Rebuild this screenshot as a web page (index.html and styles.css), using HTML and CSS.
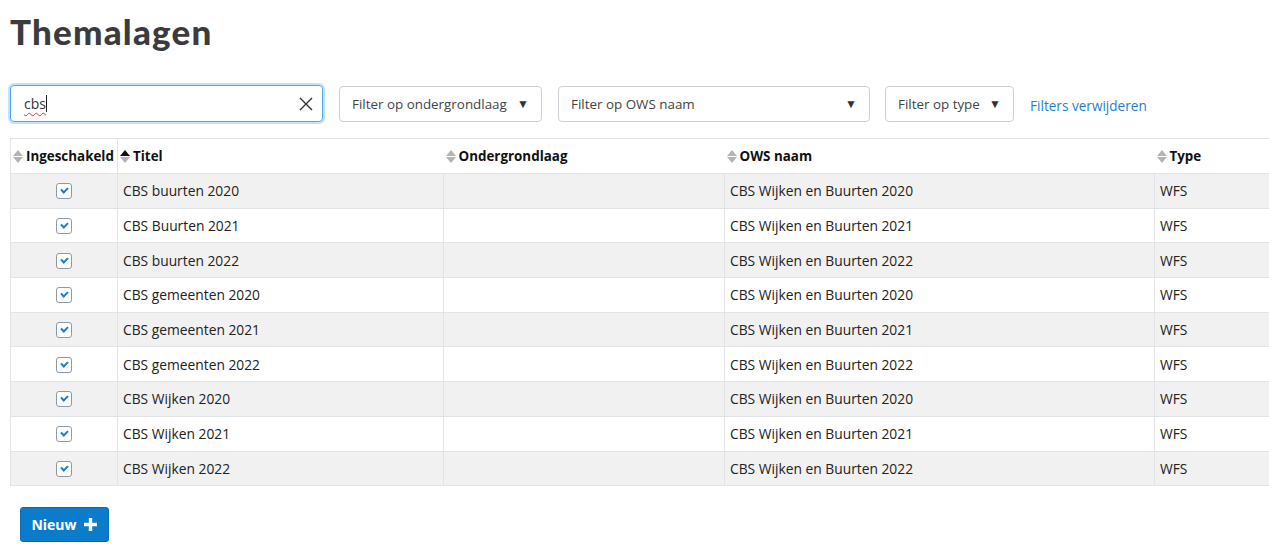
FILE: index.html
```html
<!DOCTYPE html>
<html lang="nl">
<head>
<meta charset="utf-8">
<title>Themalagen</title>
<link rel="stylesheet" href="styles.css">
</head>
<body>
<div class="page">
  <h1 class="title">Themalagen</h1>
  <div class="filters">
    <div class="search">
      <span class="search-text"><span class="typo">cbs</span><span class="caret"></span></span>
      <svg class="clear" width="14" height="14" viewBox="0 0 14 14"><path d="M1 1L13 13M13 1L1 13" stroke="#333" stroke-width="1.4" fill="none"/></svg>
    </div>
    <div class="select sel-onder"><span>Filter op ondergrondlaag</span><span class="arrow">▼</span></div>
    <div class="select sel-ows"><span>Filter op OWS naam</span><span class="arrow">▼</span></div>
    <div class="select sel-type"><span>Filter op type</span><span class="arrow">▼</span></div>
    <a class="reset" href="#">Filters verwijderen</a>
  </div>
  <table class="grid">
    <colgroup>
      <col class="c1"><col class="c2"><col class="c3"><col class="c4"><col class="c5">
    </colgroup>
    <thead>
      <tr>
        <th class="first"><span class="sort"><i class="up"></i><i class="down"></i></span>Ingeschakeld</th>
        <th><span class="sort"><i class="up active"></i><i class="down"></i></span>Titel</th>
        <th><span class="sort"><i class="up"></i><i class="down"></i></span>Ondergrondlaag</th>
        <th><span class="sort"><i class="up"></i><i class="down"></i></span>OWS naam</th>
        <th><span class="sort"><i class="up"></i><i class="down"></i></span>Type</th>
      </tr>
    </thead>
    <tbody>
      <tr><td class="chk"><span class="box"></span></td><td>CBS buurten 2020</td><td></td><td>CBS Wijken en Buurten 2020</td><td>WFS</td></tr>
      <tr><td class="chk"><span class="box"></span></td><td>CBS Buurten 2021</td><td></td><td>CBS Wijken en Buurten 2021</td><td>WFS</td></tr>
      <tr><td class="chk"><span class="box"></span></td><td>CBS buurten 2022</td><td></td><td>CBS Wijken en Buurten 2022</td><td>WFS</td></tr>
      <tr><td class="chk"><span class="box"></span></td><td>CBS gemeenten 2020</td><td></td><td>CBS Wijken en Buurten 2020</td><td>WFS</td></tr>
      <tr><td class="chk"><span class="box"></span></td><td>CBS gemeenten 2021</td><td></td><td>CBS Wijken en Buurten 2021</td><td>WFS</td></tr>
      <tr><td class="chk"><span class="box"></span></td><td>CBS gemeenten 2022</td><td></td><td>CBS Wijken en Buurten 2022</td><td>WFS</td></tr>
      <tr><td class="chk"><span class="box"></span></td><td>CBS Wijken 2020</td><td></td><td>CBS Wijken en Buurten 2020</td><td>WFS</td></tr>
      <tr><td class="chk"><span class="box"></span></td><td>CBS Wijken 2021</td><td></td><td>CBS Wijken en Buurten 2021</td><td>WFS</td></tr>
      <tr><td class="chk"><span class="box"></span></td><td>CBS Wijken 2022</td><td></td><td>CBS Wijken en Buurten 2022</td><td>WFS</td></tr>
    </tbody>
  </table>
  <button class="new" type="button">Nieuw <svg width="15" height="15" viewBox="0 0 15 15"><path d="M7.5 1V14M1 7.5H14" stroke="#fff" stroke-width="3.4" fill="none"/></svg></button>
</div>
</body>
</html>
```
FILE: styles.css
```css
* { box-sizing: border-box; }
html, body { margin: 0; padding: 0; background: #fff; }
body {
  font-family: "Open Sans", "Noto Sans", "Liberation Sans", sans-serif;
  font-size: 14px;
  color: #222;
  width: 1269px;
  overflow: hidden;
}
.page { padding: 0 0 0 10px; }
.title {
  margin: 0;
  padding-top: 11px;
  height: 60px;
  font-family: "Lato", "DejaVu Sans", sans-serif;
  font-weight: 900;
  font-size: 35px;
  line-height: 40px;
  color: #3b3b3d;
  letter-spacing: 1.2px;
}
.filters {
  display: flex;
  align-items: center;
  margin-top: 25px;
  height: 37px;
}
.search {
  width: 313px;
  height: 37px;
  border: 1px solid #4aa8ef;
  border-radius: 4px;
  box-shadow: 0 0 0 2px #c4e2fa;
  display: flex;
  align-items: center;
  justify-content: space-between;
  padding: 0 9px 0 13px;
}
.search-text { display: flex; align-items: center; font-size: 14px; color: #333; }
.typo {
  text-decoration: underline wavy #e33;
  text-decoration-thickness: 1px;
  text-underline-offset: 3px;
}
.caret { display: inline-block; width: 1px; height: 17px; background: #222; margin-left: 0; }
.clear { display: block; }
.select {
  height: 36px;
  border: 1px solid #ccd0d6;
  border-radius: 4px;
  display: flex;
  align-items: center;
  justify-content: space-between;
  padding: 0 12px 0 12px;
  color: #444;
  font-size: 13.4px;
  white-space: nowrap;
}
.arrow { font-size: 12px; color: #333; margin-left: 8px; }
.sel-onder { width: 203px; margin-left: 16px; }
.sel-ows { width: 312px; margin-left: 16px; }
.sel-type { width: 129px; margin-left: 15px; }
.reset {
  margin-left: 16px;
  color: #1f7fd0;
  text-decoration: none;
  font-size: 13.6px;
  padding-top: 4px;
}
.grid {
  margin-top: 16px;
  width: 1259px;
  border-collapse: collapse;
  table-layout: fixed;
}
.c1 { width: 107px; }
.c2 { width: 326px; }
.c3 { width: 281px; }
.c4 { width: 430px; }
.c5 { width: 115px; }
.grid th {
  height: 35px;
  text-align: left;
  font-weight: 700;
  color: #111;
  font-size: 13.4px;
  padding: 0 4px 0 2px;
  border-top: 1px solid #dfe1e5;
  white-space: nowrap;
}
.grid th.first { border-left: 1px solid #e3e4e7; border-right: 1px solid #e3e4e7; }
.sort {
  display: inline-flex;
  flex-direction: column;
  vertical-align: middle;
  margin-right: 3px;
  margin-top: -2px;
  gap: 1px;
}
.sort i { display: block; width: 0; height: 0; border-left: 5px solid transparent; border-right: 5px solid transparent; }
.sort .up { border-bottom: 6px solid #b4b4b4; }
.sort .down { border-top: 6px solid #b4b4b4; }
.sort .up.active { border-bottom-color: #111; }
.grid td {
  height: 34.7px;
  padding: 0 5px;
  border: 1px solid #e2e3e6;
  color: #222;
  white-space: nowrap;
  font-size: 13.8px;
}
.grid tbody tr:nth-child(odd) td { background: #f1f1f1; }
.grid td.chk { text-align: center; }
.box {
  display: inline-block;
  width: 16px;
  height: 16px;
  border: 1px solid #8a9bb0;
  border-radius: 3px;
  background: #fff;
  vertical-align: middle;
  position: relative;
  margin-top: -3px;
}
.box::after {
  content: "";
  position: absolute;
  left: 4px;
  top: 3px;
  width: 5px;
  height: 3px;
  border-left: 2px solid #1b7ed0;
  border-bottom: 2px solid #1b7ed0;
  transform: rotate(-45deg);
}
.new {
  margin: 21px 0 0 10px;
  width: 89px;
  height: 35px;
  background: #0b7bcc;
  border: 1px solid #0a6bb3;
  border-radius: 3px;
  color: #fff;
  font-family: "Open Sans", "Noto Sans", sans-serif;
  font-weight: 700;
  font-size: 14px;
  display: flex;
  align-items: center;
  justify-content: center;
  gap: 6px;
  padding: 0;
}
.new svg { display: block; }
```
